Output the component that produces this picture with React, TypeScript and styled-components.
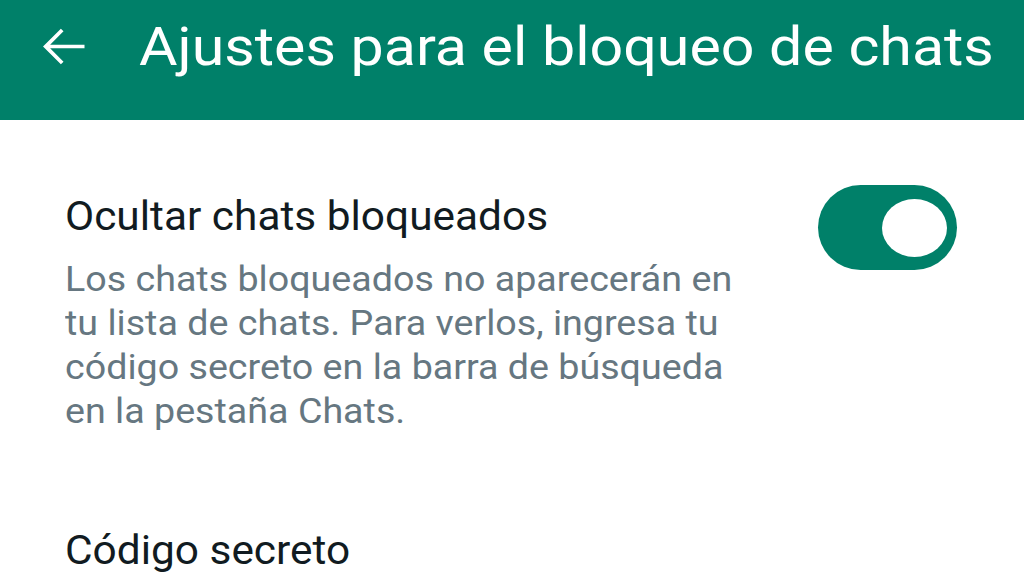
import React from 'react';
import styled, { createGlobalStyle } from 'styled-components';

const GlobalStyle = createGlobalStyle`
  html, body {
    margin: 0;
    padding: 0;
    background: #ffffff;
    font-family: Roboto, 'Noto Sans', sans-serif;
  }
`;

const Page = styled.div`
  width: 1024px;
  height: 576px;
  overflow: hidden;
  background: #ffffff;
`;

const TopBar = styled.header`
  height: 120px;
  background-color: #008069;
  display: flex;
  align-items: flex-start;
  padding: 17px 0 0 32px;
  box-sizing: border-box;
  color: #ffffff;
`;

const BackButton = styled.button`
  width: 63px;
  height: 63px;
  border: none;
  background: none;
  padding: 0;
  margin: -2px 44px 0 0;
  display: flex;
  color: #ffffff;
  flex-shrink: 0;
`;

const Title = styled.h1`
  margin: 0;
  font-size: 53px;
  line-height: 60px;
  font-weight: 400;
  white-space: nowrap;
  transform: scaleX(1.115);
  transform-origin: left center;
`;

const Settings = styled.main`
  display: flex;
  flex-direction: column;
`;

const SettingRow = styled.div<{ top: number }>`
  display: flex;
  align-items: flex-start;
  justify-content: space-between;
  padding: ${p => p.top}px 67px 0 65px;
`;

const Texts = styled.div`
  display: flex;
  flex-direction: column;
  max-width: 650px;
  transform: scaleX(1.06);
  transform-origin: left top;
`;

const Label = styled.div`
  font-size: 40px;
  line-height: 48px;
  color: #111b21;
`;

const Hint = styled.div`
  font-size: 35.5px;
  line-height: 44px;
  color: #667781;
  margin-top: 16px;
`;

const Switch = styled.div<{ on?: boolean }>`
  width: 139px;
  height: 85px;
  border-radius: 43px;
  background: ${p => (p.on ? '#008069' : '#b9c2c7')};
  display: flex;
  align-items: center;
  justify-content: ${p => (p.on ? 'flex-end' : 'flex-start')};
  padding: 0 10px;
  box-sizing: border-box;
  margin-top: -8px;
  flex-shrink: 0;
`;

const Thumb = styled.div`
  width: 65px;
  height: 58px;
  border-radius: 50%;
  background: #ffffff;
`;

const BackArrow = () => (
  <svg width="63" height="63" viewBox="0 0 24 24" fill="currentColor">
    <path d="M20 11.3H6.9l5.1-5.1-1-1L4.2 12l6.8 6.8 1-1-5.1-5.1H20z" />
  </svg>
);

export default function App() {
  return (
    <Page>
      <GlobalStyle />
      <TopBar>
        <BackButton aria-label="Atrás">
          <BackArrow />
        </BackButton>
        <Title>Ajustes para el bloqueo de chats</Title>
      </TopBar>
      <Settings>
        <SettingRow top={73}>
          <Texts>
            <Label>Ocultar chats bloqueados</Label>
            <Hint>
              Los chats bloqueados no aparecerán en tu lista de chats. Para verlos, ingresa tu
              código secreto en la barra de búsqueda en la pestaña Chats.
            </Hint>
          </Texts>
          <Switch on>
            <Thumb />
          </Switch>
        </SettingRow>
        <SettingRow top={94}>
          <Texts>
            <Label>Código secreto</Label>
          </Texts>
        </SettingRow>
      </Settings>
    </Page>
  );
}
